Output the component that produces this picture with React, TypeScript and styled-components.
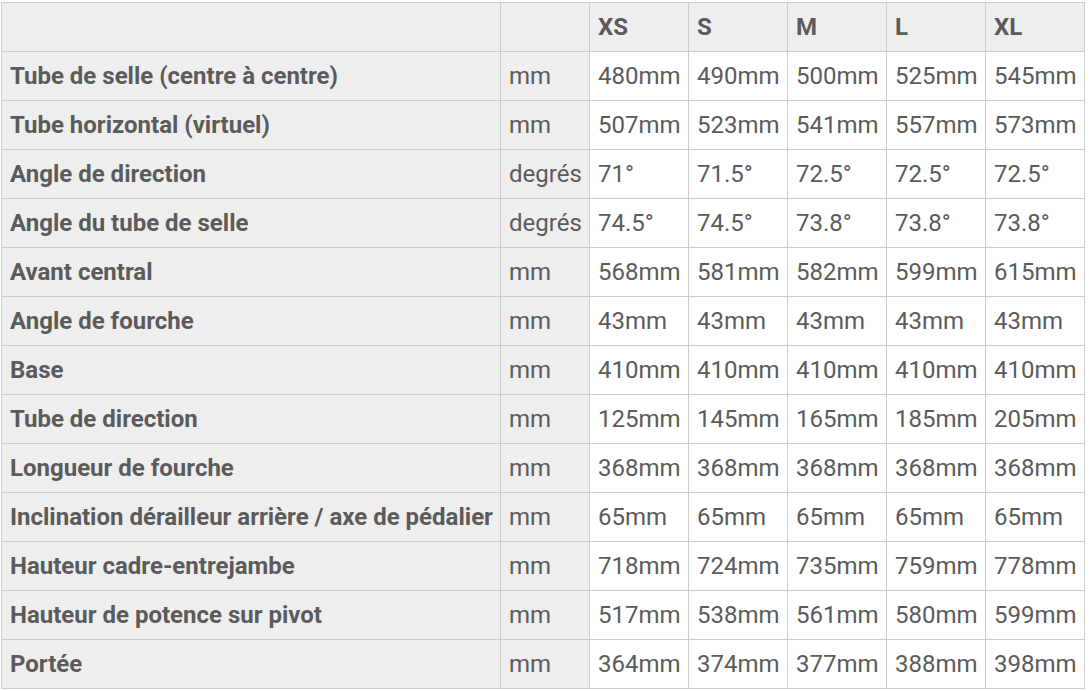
import React from 'react';
import styled, { createGlobalStyle } from 'styled-components';

const GlobalStyle = createGlobalStyle`
  body {
    margin: 0;
    background: #fff;
    font-family: Roboto, "Liberation Sans", sans-serif;
  }
`;

const sizes = ['XS', 'S', 'M', 'L', 'XL'];

const rows: { label: string; unit: string; values: string[] }[] = [
  { label: 'Tube de selle (centre à centre)', unit: 'mm', values: ['480mm', '490mm', '500mm', '525mm', '545mm'] },
  { label: 'Tube horizontal (virtuel)', unit: 'mm', values: ['507mm', '523mm', '541mm', '557mm', '573mm'] },
  { label: 'Angle de direction', unit: 'degrés', values: ['71°', '71.5°', '72.5°', '72.5°', '72.5°'] },
  { label: 'Angle du tube de selle', unit: 'degrés', values: ['74.5°', '74.5°', '73.8°', '73.8°', '73.8°'] },
  { label: 'Avant central', unit: 'mm', values: ['568mm', '581mm', '582mm', '599mm', '615mm'] },
  { label: 'Angle de fourche', unit: 'mm', values: ['43mm', '43mm', '43mm', '43mm', '43mm'] },
  { label: 'Base', unit: 'mm', values: ['410mm', '410mm', '410mm', '410mm', '410mm'] },
  { label: 'Tube de direction', unit: 'mm', values: ['125mm', '145mm', '165mm', '185mm', '205mm'] },
  { label: 'Longueur de fourche', unit: 'mm', values: ['368mm', '368mm', '368mm', '368mm', '368mm'] },
  { label: 'Inclination dérailleur arrière / axe de pédalier', unit: 'mm', values: ['65mm', '65mm', '65mm', '65mm', '65mm'] },
  { label: 'Hauteur cadre-entrejambe', unit: 'mm', values: ['718mm', '724mm', '735mm', '759mm', '778mm'] },
  { label: 'Hauteur de potence sur pivot', unit: 'mm', values: ['517mm', '538mm', '561mm', '580mm', '599mm'] },
  { label: 'Portée', unit: 'mm', values: ['364mm', '374mm', '377mm', '388mm', '398mm'] },
];

export default function App() {
  return (
    <Page>
      <GlobalStyle />
      <GeoTable>
        <colgroup>
          <col style={{ width: 499 }} />
          <col style={{ width: 89 }} />
          {sizes.map((s) => (
            <col key={s} style={{ width: 99 }} />
          ))}
        </colgroup>
        <thead>
          <tr>
            <HeadCell />
            <HeadCell />
            {sizes.map((s) => (
              <HeadCell key={s}>{s}</HeadCell>
            ))}
          </tr>
        </thead>
        <tbody>
          {rows.map((r) => (
            <tr key={r.label}>
              <LabelCell>{r.label}</LabelCell>
              <UnitCell>{r.unit}</UnitCell>
              {r.values.map((v, i) => (
                <ValueCell key={i}>{v}</ValueCell>
              ))}
            </tr>
          ))}
        </tbody>
      </GeoTable>
    </Page>
  );
}

const Page = styled.div`
  padding: 2px 0 0 1px;
`;

const GeoTable = styled.table`
  border-collapse: collapse;
  table-layout: fixed;
  width: 1084px;
  color: #5b5b5b;
  font-size: 24px;
  line-height: 28px;

  & td,
  & th {
    border: 1px solid #cccccc;
    height: 49px;
    padding: 0 8px;
    text-align: left;
    vertical-align: middle;
    white-space: nowrap;
    overflow: hidden;
    box-sizing: border-box;
  }
`;

const HeadCell = styled.th`
  background: #eeeeee;
  font-weight: 700;
`;

const LabelCell = styled.td`
  background: #eeeeee;
  font-weight: 700;
`;

const UnitCell = styled.td`
  background: #eeeeee;
  font-weight: 400;
`;

const ValueCell = styled.td`
  background: #ffffff;
  font-weight: 400;
`;
